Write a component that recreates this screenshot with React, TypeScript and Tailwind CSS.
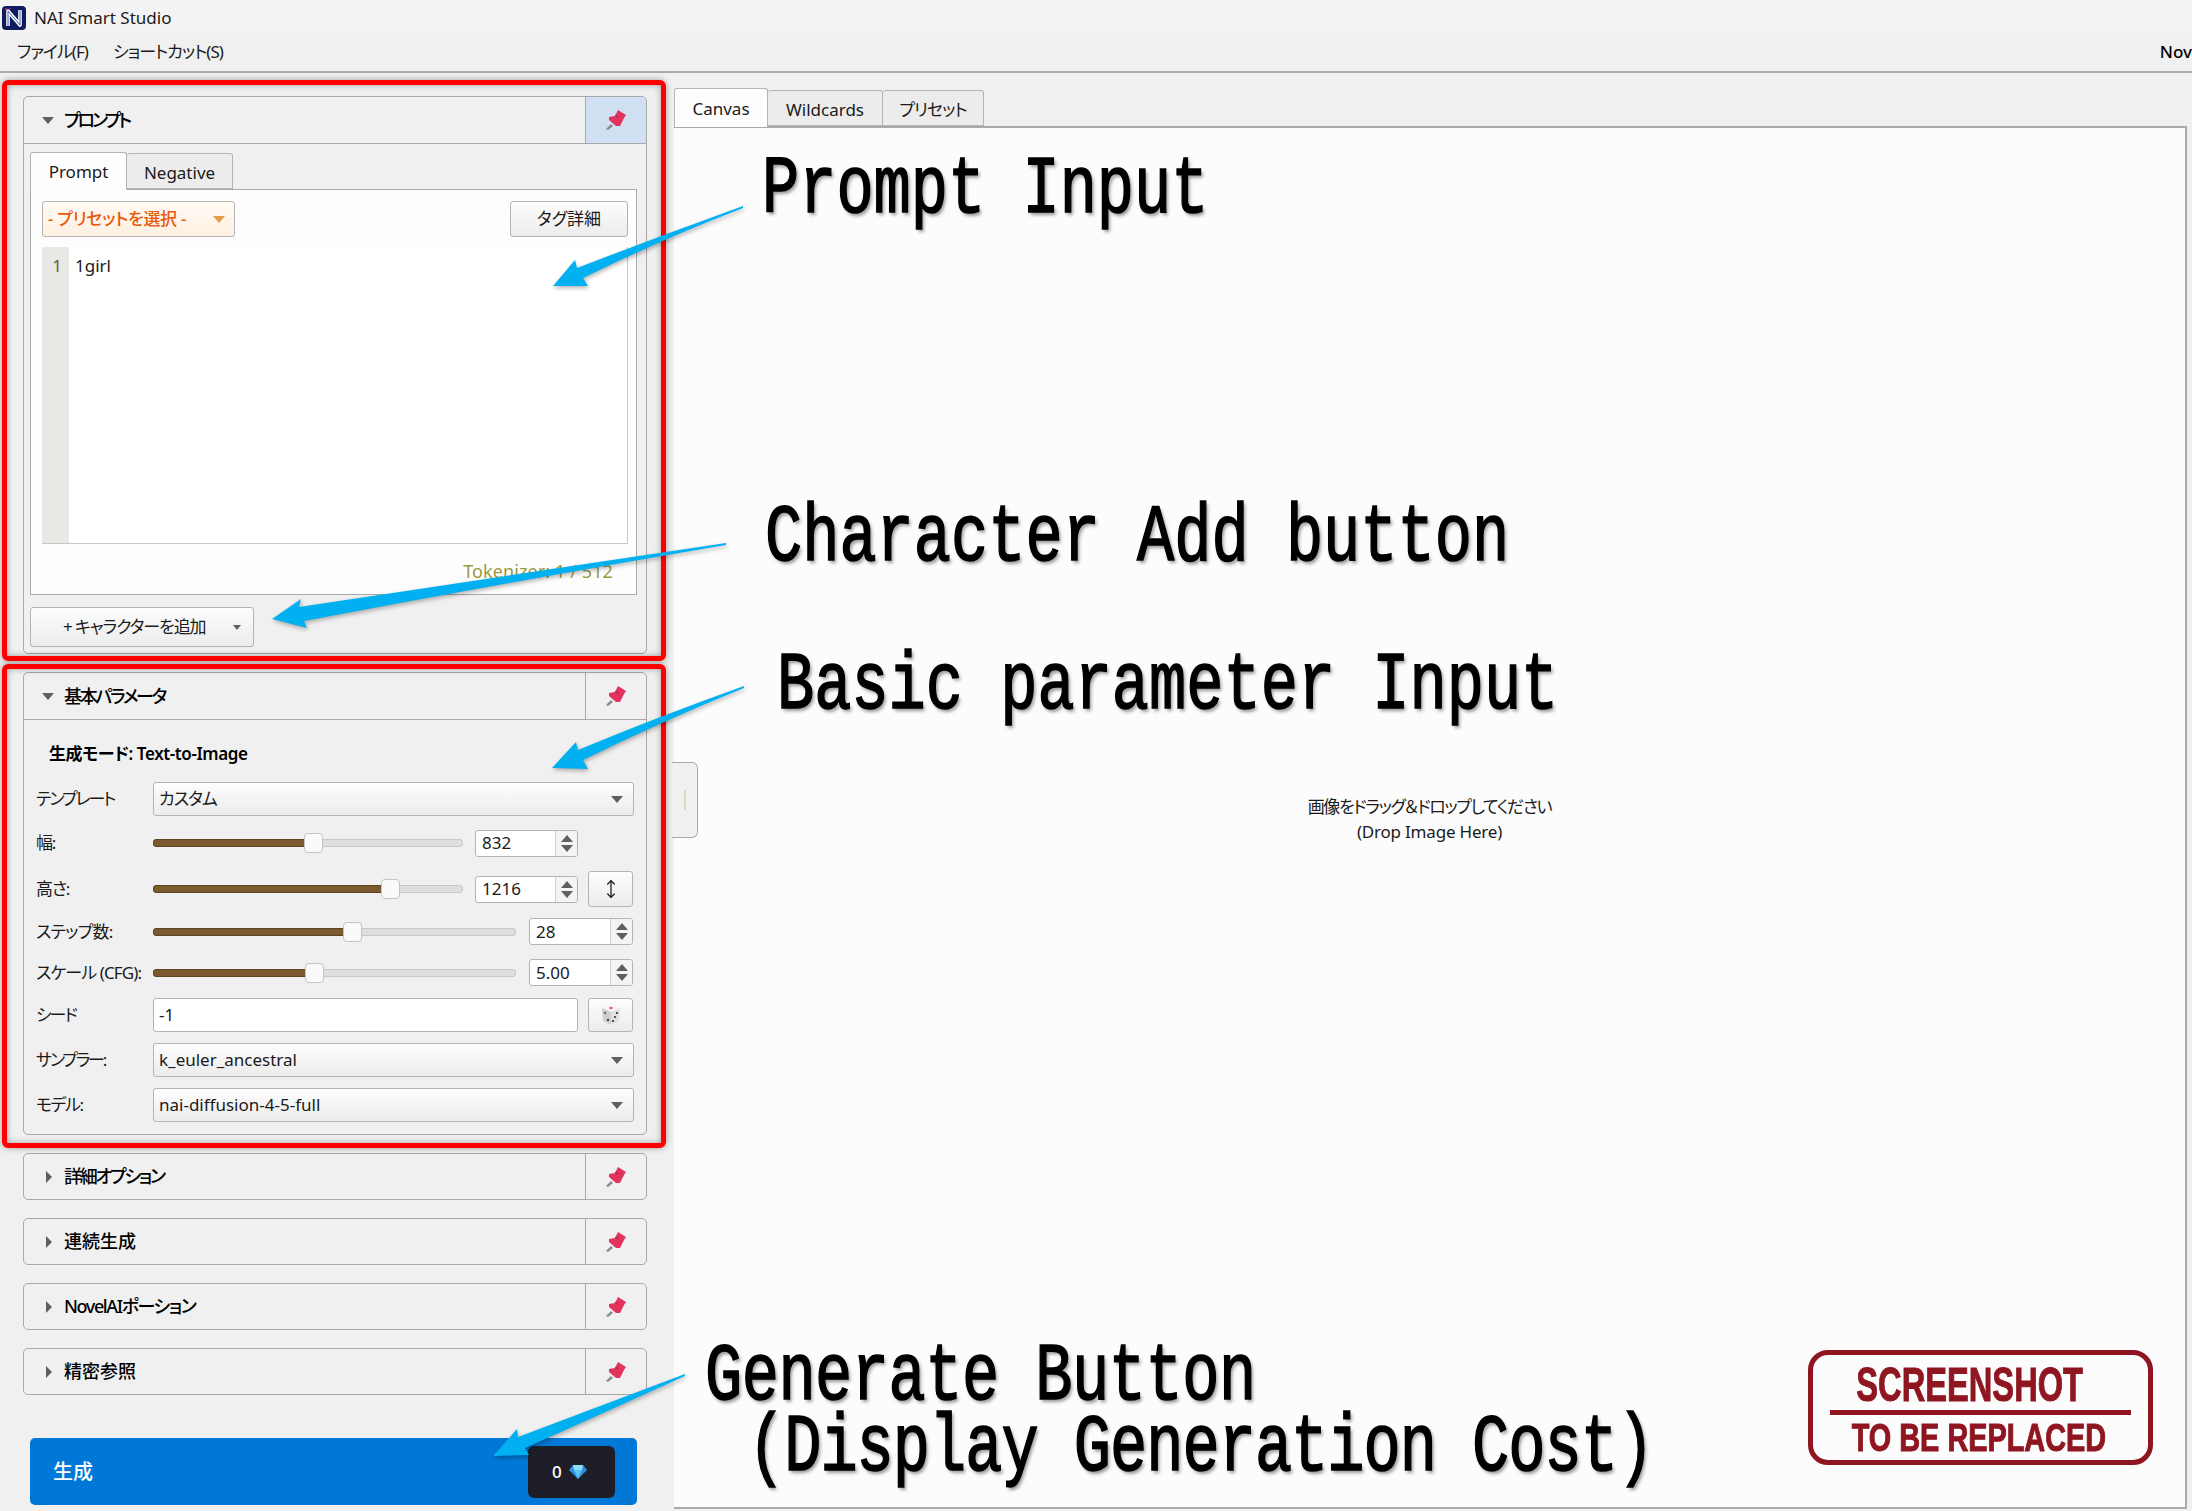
import type { ReactNode } from "react";
import { MoveVertical } from "lucide-react";

const ui =
  "font-['Noto_Sans','Noto_Sans_CJK_JP',sans-serif] [font-feature-settings:'palt']";

function Pin() {
  return (
    <svg width="50" height="40" viewBox="0 0 50 40">
      <path d="M15 29 L20 24 L22 26 L17 30 Z" fill="#8a8a8a" />
      <path
        d="M27 10 L35 15 L33 18 L29 26 L25 26 L18 20 L18 17 L24 16 Z"
        fill="#e2335f"
      />
      <path d="M24 15 L27 17" stroke="#a02040" strokeWidth="1" />
    </svg>
  );
}

function Logo() {
  return (
    <svg width="24" height="24" viewBox="0 0 24 24">
      <rect width="24" height="24" rx="4" fill="#101a5e" />
      <circle cx="4" cy="3" r="1" fill="#d0356a" />
      <circle cx="8" cy="2.5" r="0.8" fill="#c03a80" />
      <path
        d="M6 20 V5 L18 19 V4"
        fill="none"
        stroke="#ffffff"
        strokeWidth="3.6"
        strokeLinejoin="round"
      />
      <path
        d="M6 20 V5 L18 19 V4"
        fill="none"
        stroke="#3a5fc0"
        strokeWidth="1"
        strokeLinejoin="round"
      />
    </svg>
  );
}

function Dice() {
  return (
    <svg width="20" height="22" viewBox="0 0 20 22">
      <path d="M10 1 L19 4 L10 8 L1 4 Z" fill="#f5f5f5" />
      <path d="M1 4 L10 8 V21 L2 17 Z" fill="#cfcfcf" />
      <path d="M19 4 L10 8 V21 L18 17 Z" fill="#e2e2e2" />
      <ellipse cx="10" cy="4" rx="2" ry="1" fill="#e8457a" />
      <circle cx="4" cy="9" r="1.2" fill="#5a6a8a" />
      <circle cx="7" cy="16" r="1.2" fill="#444" />
      <circle cx="16" cy="9" r="1.1" fill="#333" />
      <circle cx="14" cy="13" r="1.1" fill="#333" />
      <circle cx="12" cy="17" r="1.1" fill="#333" />
    </svg>
  );
}

function Gem() {
  return (
    <svg width="18" height="14" viewBox="0 0 18 14">
      <path d="M4 0 H14 L18 5 L9 14 L0 5 Z" fill="#2f8fe0" />
      <path d="M5 5 H13 L9 14 Z" fill="#5cc4f5" />
      <path d="M4 0 L5 5 H13 L14 0 Z" fill="#8fdcfa" />
    </svg>
  );
}

function Caret({ color = "#5f5f5f" }: { color?: string }) {
  return (
    <span
      className="block h-0 w-0 border-x-[6px] border-t-[7px] border-x-transparent"
      style={{ borderTopColor: color }}
    />
  );
}

function GroupHead({
  title,
  open,
  active,
  className = "h-[46px]",
  track = "tracking-[-2.3px]",
}: {
  title: string;
  open?: boolean;
  active?: boolean;
  className?: string;
  track?: string;
}) {
  return (
    <div className={`flex shrink-0 items-stretch ${className}`}>
      <div className="flex flex-1 items-center pl-[18px]">
        <span className="flex w-[22px] items-center">
          {open ? (
            <Caret />
          ) : (
            <span className="ml-[4px] block h-0 w-0 border-y-[6px] border-l-[6px] border-y-transparent border-l-[#5f5f5f]" />
          )}
        </span>
        <span className={`text-[18px] font-medium text-black ${track}`}>
          {title}
        </span>
      </div>
      <div
        className={`flex w-[61px] items-center justify-center border-l border-[#a9a9a9] ${
          active ? "rounded-tr-[5px] bg-[#d0dff1]" : ""
        }`}
      >
        <Pin />
      </div>
    </div>
  );
}

function Combo({
  text,
  className = "",
}: {
  text: string;
  className?: string;
}) {
  return (
    <div
      className={`flex h-[34px] items-center justify-between rounded-[3px] border border-[#b4b4b4] bg-linear-to-b from-[#fdfdfd] to-[#ececec] pl-[5px] pr-[10px] text-[17px] text-[#1a1a1a] ${className}`}
    >
      <span>{text}</span>
      <Caret />
    </div>
  );
}

function Spin({ value, className = "" }: { value: string; className?: string }) {
  return (
    <div
      className={`flex h-[27px] shrink-0 items-stretch overflow-hidden rounded-[3px] border border-[#b4b4b4] bg-white ${className}`}
    >
      <span className="flex flex-1 items-center pl-[6px] text-[17px] text-[#1a1a1a]">
        {value}
      </span>
      <span className="flex w-[22px] flex-col items-center justify-center gap-[3px] border-l border-[#d0d0d0] bg-[#f4f4f4]">
        <span className="block h-0 w-0 border-x-[6px] border-b-[7px] border-x-transparent border-b-[#5f5f5f]" />
        <span className="block h-0 w-0 border-x-[6px] border-t-[7px] border-x-transparent border-t-[#5f5f5f]" />
      </span>
    </div>
  );
}

function Slider({ w, at }: { w: string; at: number }) {
  return (
    <div className={`relative h-[20px] shrink-0 ${w}`}>
      <div className="absolute inset-x-0 top-[6px] h-[8px] rounded-[3px] border border-[#c8c8c8] bg-[#dedede]" />
      <div
        className="absolute left-0 top-[6px] h-[8px] rounded-l-[3px] border border-[#5d4521] bg-[#7a5a2e]"
        style={{ width: at }}
      />
      <div
        className="absolute top-0 h-[20px] w-[19px] rounded-[4px] border border-[#c4c4c4] bg-[#fafafa]"
        style={{ left: at - 1 }}
      />
    </div>
  );
}

function Row({
  label,
  children,
  className = "",
  track = "tracking-[-1.2px]",
}: {
  label: string;
  children: ReactNode;
  className?: string;
  track?: string;
}) {
  return (
    <div className={`flex items-center ${className}`}>
      <span className={`w-[117px] shrink-0 text-[17px] text-[#1a1a1a] ${track}`}>
        {label}
      </span>
      {children}
    </div>
  );
}

function Tab({
  text,
  active,
  className = "",
}: {
  text: string;
  active?: boolean;
  className?: string;
}) {
  return (
    <div
      className={`flex items-center justify-center rounded-t-[3px] border border-[#b4b4b4] text-[17px] text-[#1a1a1a] ${
        active ? "z-10 -mb-px border-b-0 bg-[#fdfdfd] pt-[1px]" : "bg-[#ececec] pt-[3px]"
      } ${className}`}
    >
      {text}
    </div>
  );
}

function Note({ text, className }: { text: string; className: string }) {
  return (
    <span
      className={`absolute origin-top-left scale-y-[1.32] whitespace-pre font-['Liberation_Mono',monospace] text-[62px] leading-none text-black [-webkit-text-stroke:1.2px_black] [text-shadow:2px_2px_3px_#999] ${className}`}
    >
      {text}
    </span>
  );
}

export default function App() {
  return (
    <div
      className={`relative flex h-[1511px] w-[2192px] flex-col overflow-hidden bg-[#f0f0f0] ${ui}`}
    >
      {/* title bar */}
      <div className="flex h-[33px] shrink-0 items-center gap-[8px] bg-[#f3f3f3] pl-[2px] pt-[2px]">
        <Logo />
        <span className="text-[17px] text-[#1a1a1a]">NAI Smart Studio</span>
      </div>

      {/* menu */}
      <div className="flex h-[40px] shrink-0 items-center gap-[25px] border-b-2 border-[#aaaaaa] pl-[17px] text-[17px] tracking-[-1px] text-[#1a1a1a]">
        <span>ファイル(F)</span>
        <span>ショートカット(S)</span>
        <span className="ml-auto font-medium tracking-normal text-black">Nov</span>
      </div>

      <div className="flex min-h-0 flex-1">
        {/* left column */}
        <div className="flex w-[672px] shrink-0 flex-col pl-[23px] pt-[23px]">
          <div className="flex h-[558px] w-[624px] flex-col rounded-[5px] border border-[#a9a9a9]">
            <div className="border-b border-[#a9a9a9]">
              <GroupHead title="プロンプト" open active track="tracking-[-3px]" />
            </div>
            <div className="flex flex-1 flex-col pl-[6px] pr-[9px] pt-[8px]">
              <div className="flex items-end">
                <Tab text="Prompt" active className="h-[38px] w-[97px]" />
                <Tab text="Negative" className="h-[36px] w-[106px] border-l-0" />
              </div>
              <div className="flex h-[406px] flex-col border border-[#a9a9a9] bg-[#fdfdfd] pl-[11px] pr-[8px] pt-[11px]">
                <div className="flex items-center justify-between">
                  <div className="flex h-[36px] w-[193px] items-center justify-between rounded-[3px] border border-[#b4b4b4] bg-linear-to-b from-[#fffaf4] to-[#fdf0e0] pl-[5px] pr-[9px] text-[17px] font-medium tracking-[-0.3px] text-[#e8590c]">
                    <span>- プリセットを選択 -</span>
                    <Caret color="#e39a4c" />
                  </div>
                  <div className="flex h-[36px] w-[118px] items-center justify-center rounded-[3px] border border-[#b4b4b4] bg-linear-to-b from-[#fdfdfd] to-[#ececec] text-[17px] text-[#1a1a1a]">
                    タグ詳細
                  </div>
                </div>
                <div className="mt-[10px] flex h-[297px] border-b border-r border-[#c8c8c8] bg-white">
                  <div className="w-[27px] bg-[#e8e8e4] pt-[7px] pr-[7px] text-right text-[17px] leading-[24px] text-[#6b5a3e]">
                    1
                  </div>
                  <div className="pl-[6px] pt-[7px] text-[17px] leading-[24px] text-[#1a1a1a]">
                    1girl
                  </div>
                </div>
                <div className="mt-[15px] pr-[15px] text-right text-[18px] leading-[24px] tracking-[0.1px] text-[#9a9a3c]">
                  Tokenizer: 1 / 512
                </div>
              </div>
              <div className="mt-[12px] flex h-[40px] w-[224px] items-center justify-between rounded-[3px] border border-[#b4b4b4] bg-linear-to-b from-[#fdfdfd] to-[#ececec] pl-[32px] pr-[12px] text-[17px] tracking-[-1.1px] text-[#1a1a1a]">
                <span>+ キャラクターを追加</span>
                <span className="block h-0 w-0 border-x-[4px] border-t-[5px] border-x-transparent border-t-[#5f5f5f]" />
              </div>
            </div>
          </div>

          <div className="mt-[18px] flex h-[463px] w-[624px] flex-col rounded-[5px] border border-[#a9a9a9]">
            <div className="border-b border-[#a9a9a9]">
              <GroupHead title="基本パラメータ" open />
            </div>
            <div className="flex flex-col px-[12px] pt-[22px]">
              <div className="flex h-[24px] items-center pl-[13px] text-[17px] font-semibold tracking-[-0.4px] text-black">
                生成モード: Text-to-Image
              </div>
              <Row label="テンプレート" className="mt-[16px]" track="tracking-[-2px]">
                <Combo text="カスタム" className="flex-1 tracking-[-1px]" />
              </Row>
              <Row label="幅:" className="mt-[13px] h-[28px]">
                <Slider w="w-[310px]" at={152} />
                <Spin value="832" className="ml-[12px] w-[103px]" />
              </Row>
              <Row label="高さ:" className="mt-[14px] h-[36px]">
                <Slider w="w-[310px]" at={229} />
                <Spin value="1216" className="ml-[12px] w-[103px]" />
                <div className="ml-[10px] flex h-[36px] w-[45px] items-center justify-center rounded-[3px] border border-[#b4b4b4] bg-linear-to-b from-[#fdfdfd] to-[#ececec]">
                  <MoveVertical size={20} color="#222222" strokeWidth={1.6} />
                </div>
              </Row>
              <Row label="ステップ数:" className="mt-[11px] h-[27px]" track="tracking-[-0.8px]">
                <Slider w="w-[363px]" at={191} />
                <Spin value="28" className="ml-[13px] w-[104px]" />
              </Row>
              <Row label="スケール (CFG):" className="mt-[14px] h-[27px]" track="tracking-[-0.9px]">
                <Slider w="w-[363px]" at={153} />
                <Spin value="5.00" className="ml-[13px] w-[104px]" />
              </Row>
              <Row label="シード" className="mt-[12px]" track="tracking-[-2px]">
                <div className="flex h-[34px] w-[425px] items-center rounded-[3px] border border-[#b4b4b4] bg-white pl-[5px] text-[17px] text-[#1a1a1a]">
                  -1
                </div>
                <div className="ml-[10px] flex h-[34px] w-[45px] items-center justify-center rounded-[3px] border border-[#b4b4b4] bg-linear-to-b from-[#fdfdfd] to-[#ececec]">
                  <Dice />
                </div>
              </Row>
              <Row label="サンプラー:" className="mt-[11px]" track="tracking-[-2.2px]">
                <Combo text="k_euler_ancestral" className="flex-1" />
              </Row>
              <Row label="モデル:" className="mt-[11px]" track="tracking-[-1.5px]">
                <Combo text="nai-diffusion-4-5-full" className="flex-1" />
              </Row>
            </div>
          </div>

          {[
            { t: "詳細オプション", track: "tracking-[-2.2px]" },
            { t: "連続生成", track: "tracking-normal" },
            { t: "NovelAIポーション", track: "tracking-[-1.4px]" },
            { t: "精密参照", track: "tracking-normal" },
          ].map(({ t, track }) => (
            <div
              key={t}
              className="mt-[18px] w-[624px] rounded-[5px] border border-[#a9a9a9]"
            >
              <GroupHead title={t} className="h-[45px]" track={track} />
            </div>
          ))}

          <div className="ml-[7px] mt-[43px] flex h-[67px] w-[607px] items-center justify-between rounded-[5px] bg-[#0078d7] pl-[23px] pr-[22px]">
            <span className="text-[20px] font-medium text-white">生成</span>
            <div className="flex h-[52px] w-[87px] items-center gap-[7px] rounded-[6px] bg-[#1e1e28] pl-[24px] text-[17px] font-medium text-white">
              <span>0</span>
              <Gem />
            </div>
          </div>
        </div>

        {/* right column */}
        <div className="ml-[2px] flex w-[1513px] flex-col pb-[2px] pt-[15px]">
          <div className="flex items-end">
            <Tab text="Canvas" active className="h-[39px] w-[94px]" />
            <Tab text="Wildcards" className="h-[36px] w-[115px] border-l-0" />
            <Tab text="プリセット" className="h-[36px] w-[101px] border-l-0 tracking-[-1px]" />
          </div>
          <div className="relative flex flex-1 flex-col items-center justify-center border-2 border-[#aaaaaa] border-l-0 bg-[#fcfcfc] pt-[3px] text-[17px] leading-[25px] tracking-[-0.2px] text-[#1a1a1a]">
            <span className="tracking-[-1.4px]">画像をドラッグ＆ドロップしてください</span>
            <span>(Drop Image Here)</span>

            {/* placeholder stamp */}
            <div className="absolute bottom-[42px] right-[32px] flex h-[115px] w-[345px] flex-col items-center rounded-[20px] border-[5px] border-[#8f1620] font-['Liberation_Sans',sans-serif] font-bold leading-none tracking-normal text-[#8f1620]">
              <span className="mr-[22px] mt-[8px] origin-top scale-x-[0.68] whitespace-nowrap text-[48px] leading-[44px] [-webkit-text-stroke:1px_#8f1620]">
                SCREENSHOT
              </span>
              <span className="mt-[3px] h-[5px] w-[301px] bg-[#8f1620]" />
              <span className="mr-[4px] mt-[6px] origin-top scale-x-[0.74] whitespace-nowrap text-[39px] leading-[34px] [-webkit-text-stroke:1px_#8f1620]">
                TO BE REPLACED
              </span>
            </div>
          </div>
        </div>
      </div>

      {/* splitter grip */}
      <div className="absolute left-[672px] top-[762px] flex h-[76px] w-[26px] items-center justify-center rounded-r-[6px] border border-l-0 border-[#a9a9a9] bg-[#f0f0f0]">
        <span className="h-[20px] w-[2px] bg-[#e0d8b8]" />
      </div>

      {/* annotation overlay */}
      <div className="absolute left-[2px] top-[80px] h-[581px] w-[664px] rounded-[6px] border-[5px] border-[#ff0000] shadow-[0_0_6px_rgba(0,0,0,0.35),inset_0_0_6px_rgba(0,0,0,0.35)]" />
      <div className="absolute left-[2px] top-[664px] h-[484px] w-[664px] rounded-[6px] border-[5px] border-[#ff0000] shadow-[0_0_6px_rgba(0,0,0,0.35),inset_0_0_6px_rgba(0,0,0,0.35)]" />

      <svg
        className="pointer-events-none absolute left-0 top-0 drop-shadow-[1px_2px_2px_rgba(0,0,0,0.3)]"
        width="2192"
        height="1511"
        viewBox="0 0 2192 1511"
      >
        <g fill="#00b0f0">
          <path d="M743 206 Q660 236 577 268 L575 260 L553 286 L588 286 L583 278 Q660 240 743 208 Z" />
          <path d="M726 543 L299 607 L301 599 L272 619 L307 628 L304 621 Q520 580 726 545 Z" />
          <path d="M744 686 Q660 716 578 750 L576 742 L552 768 L588 769 L583 760 Q660 722 744 688 Z" />
          <path d="M685 1374 L518 1437 L517 1429 L493 1456 L529 1455 L525 1448 Q610 1410 685 1376 Z" />
        </g>
      </svg>

      <Note text="Prompt Input" className="left-[762px] top-[150px]" />
      <Note text="Character Add button" className="left-[765px] top-[498px]" />
      <Note text="Basic parameter Input" className="left-[777px] top-[646px]" />
      <Note text="Generate Button" className="left-[705px] top-[1337px] tracking-[-0.5px]" />
      <Note text="(Display Generation Cost)" className="left-[748px] top-[1408px] tracking-[-1px]" />
    </div>
  );
}
